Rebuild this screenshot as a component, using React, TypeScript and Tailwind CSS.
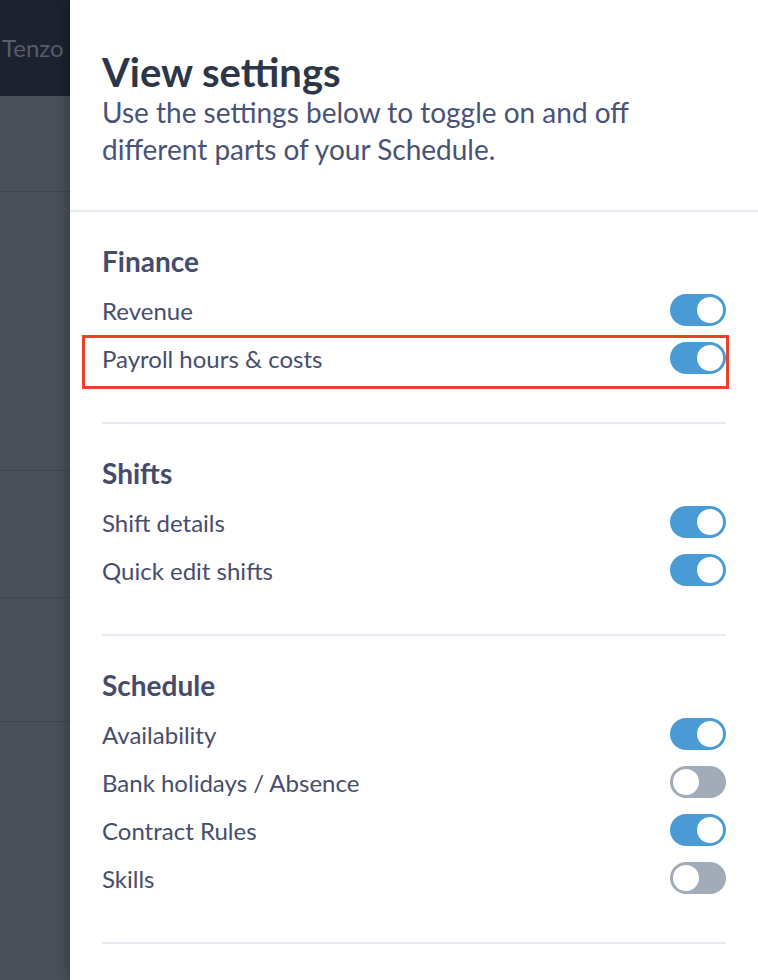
import { useState } from "react";

type Item = { label: string; on: boolean; flagged?: boolean };
type Section = { title: string; items: Item[] };

const sections: Section[] = [
  {
    title: "Finance",
    items: [
      { label: "Revenue", on: true },
      { label: "Payroll hours & costs", on: true, flagged: true },
    ],
  },
  {
    title: "Shifts",
    items: [
      { label: "Shift details", on: true },
      { label: "Quick edit shifts", on: true },
    ],
  },
  {
    title: "Schedule",
    items: [
      { label: "Availability", on: true },
      { label: "Bank holidays / Absence", on: false },
      { label: "Contract Rules", on: true },
      { label: "Skills", on: false },
    ],
  },
];

function Toggle({ on, onClick }: { on: boolean; onClick: () => void }) {
  return (
    <button
      onClick={onClick}
      className={`flex h-8 w-14 shrink-0 items-center rounded-full p-[3px] ${
        on ? "justify-end bg-[#4a9bd5]" : "justify-start bg-[#a2acb8]"
      }`}
    >
      <span className="h-[26px] w-[26px] rounded-full bg-white" />
    </button>
  );
}

export default function App() {
  const [state, setState] = useState(sections);

  const flip = (si: number, ii: number) =>
    setState((prev) =>
      prev.map((s, i) =>
        i !== si
          ? s
          : { ...s, items: s.items.map((it, j) => (j === ii ? { ...it, on: !it.on } : it)) }
      )
    );

  return (
    <div className="flex h-[980px] w-[758px] overflow-hidden bg-white font-['Lato',sans-serif]">
      {/* dimmed app behind the drawer */}
      <aside className="flex w-[70px] shrink-0 flex-col bg-[#4a505a]">
        <div className="flex h-24 items-center bg-[#1c2230] pl-[2px] text-[24px] text-[#575d6a]">
          Tenzo
        </div>
        <div className="h-24 border-b border-[#41464f]" />
        <div className="h-[155px] border-b border-[#474c56]" />
        <div className="h-[124px] border-b border-[#41464f]" />
        <div className="h-[127px] border-b border-[#41464f]" />
        <div className="h-[124px] border-b border-[#41464f]" />
        <div className="flex-1" />
      </aside>

      <main className="relative flex-1 bg-white shadow-[-6px_0_10px_rgba(0,0,0,0.18)]">
        <header className="border-b-2 border-[#e6eaf0] px-8 pt-[50px] pb-[42px]">
          <h1 className="text-[40px] font-bold leading-[44px] text-[#2d3648]">View settings</h1>
          <p className="text-[28px] leading-[37px] text-[#4a5275]">
            Use the settings below to toggle on and off different parts of your Schedule.
          </p>
        </header>

        {state.map((section, si) => (
          <section
            key={section.title}
            className="mx-8 border-b-2 border-[#e6eaf0] pt-[29px] pb-10"
          >
            <h2 className="mb-[5px] text-[28px] font-bold leading-10 text-[#454b6b]">
              {section.title}
            </h2>
            {section.items.map((item, ii) => (
              <div key={item.label} className="relative flex h-12 items-center justify-between">
                <span className="pt-[2px] text-[24px] text-[#474d6c]">{item.label}</span>
                <Toggle on={item.on} onClick={() => flip(si, ii)} />
                {item.flagged && (
                  <div className="pointer-events-none absolute top-[1px] -right-[3px] -bottom-[7px] -left-5 border-[3px] border-[#e8422b]" />
                )}
              </div>
            ))}
          </section>
        ))}
      </main>
    </div>
  );
}
